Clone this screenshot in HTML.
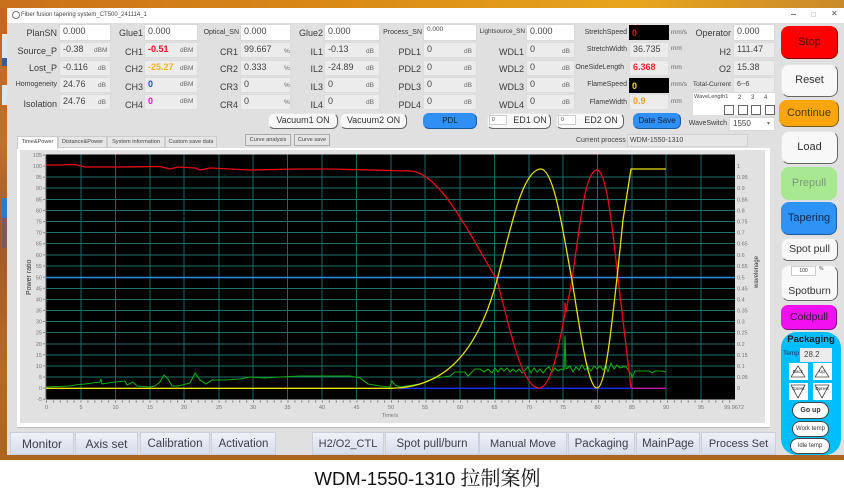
<!DOCTYPE html>
<html><head><meta charset="utf-8"><style>
html,body{margin:0;padding:0;background:#fff}
#p{position:relative;width:844px;height:490px;overflow:hidden;background:#fff;font-family:"Liberation Sans","Noto Sans CJK SC",sans-serif;color:#333}
#p div{position:absolute;box-sizing:border-box;white-space:nowrap}
.l{text-align:right;font-size:9px;height:16px;line-height:16px;color:#3a3a3a}
.s{font-size:7px}
.f{background:#ececec;border:1px solid #dcdcdc;font-size:9px;line-height:13px;padding-left:3px;height:16px;color:#444}
.w{background:#fff;border-color:#d8d8d8}
.u{font-size:6.5px;color:#666;line-height:16px;height:16px}
.b{background:#f8f8f8;border:1px solid #e6e6e6;border-right:1.5px solid #666;border-bottom:1.5px solid #666;border-radius:6px;text-align:center;color:#333}
.t{background:linear-gradient(#eef1f7,#d6dcea);border:1px solid #c9cfdc;font-size:11px;line-height:22px;text-align:center;height:23px;top:432px;color:#3c4048}
.tab{font-size:5.6px;line-height:11px;text-align:center;background:#e6e6e6;border:1px solid #ccc;height:12px;top:136px;color:#444}
.tri{background:#fff;width:19px;height:17px}
.pill{background:#fff;border:1px solid #444;border-radius:9px;text-align:center;font-size:6px;color:#333}
</style></head><body><div id="p"><div id="m" style="left:0;top:0;width:844px;height:490px;filter:blur(.3px)">

<div style="left:0;top:0;width:844px;height:8px;background:linear-gradient(90deg,#c9701a,#d98a16 40%,#e8a51c 75%,#c98a2a)"></div>
<div style="left:0;top:8px;width:7px;height:452px;background:linear-gradient(#c8641c,#c07028 30%,#a05a30 50%,#b56a20 80%,#a8661c)"></div>
<div style="left:2px;top:34px;width:5px;height:24px;background:#dfe7ee"></div>
<div style="left:2px;top:58px;width:5px;height:8px;background:#3a5a90"></div>
<div style="left:2px;top:85px;width:5px;height:20px;background:#dfe7ee"></div>
<div style="left:2px;top:198px;width:5px;height:20px;background:#2a7ad0"></div>
<div style="left:2px;top:218px;width:5px;height:30px;background:#7a5a5a"></div>
<div style="left:0;top:455px;width:844px;height:5px;background:#a8661c"></div>

<div style="left:7px;top:8px;width:837px;height:15px;background:#fff"></div>
<div style="left:12px;top:11px;width:8px;height:8px;border:1px solid #777;border-radius:50%"></div>
<div style="left:21px;top:10px;font-size:6px;line-height:10px;color:#444">Fiber fusion tapering system_CT500_241114_1</div>
<div style="left:791px;top:14px;width:5px;height:1px;background:#777"></div>
<div style="left:811px;top:12px;width:5px;height:5px;border:1px solid #ddd"></div>
<div style="left:831px;top:9px;font-size:8px;color:#555">✕</div>
<div style="left:7px;top:23px;width:837px;height:432px;background:#e0e0e0"></div>

<div class="l" style="left:0;width:57px;top:25px">PlanSN</div><div class="f w" style="left:59px;width:52px;top:24px;height:17px">0.000</div>
<div class="l" style="left:0;width:57px;top:43px">Source_P</div><div class="f" style="left:59px;width:52px;top:42px">-0.38</div><div class="u" style="left:94px;top:43px">dBM</div>
<div class="l" style="left:0;width:57px;top:60px">Lost_P</div><div class="f" style="left:59px;width:52px;top:60px">-0.116</div><div class="u" style="left:98px;top:61px">dB</div>
<div class="l s" style="left:0;width:57px;top:77px">Homogeneity</div><div class="f" style="left:59px;width:52px;top:77px">24.76</div><div class="u" style="left:98px;top:78px">dB</div>
<div class="l" style="left:0;width:57px;top:96px">Isolation</div><div class="f" style="left:59px;width:52px;top:94px">24.76</div><div class="u" style="left:98px;top:95px">dB</div>

<div class="l" style="left:100px;width:43px;top:25px">Glue1</div><div class="f w" style="left:144px;width:54px;top:24px;height:17px">0.000</div>
<div class="l" style="left:100px;width:43px;top:44px">CH1</div><div class="f" style="left:144px;width:54px;top:42px;color:#f01020;font-weight:bold">-0.51</div><div class="u" style="left:180px;top:43px">dBM</div>
<div class="l" style="left:100px;width:43px;top:61px">CH2</div><div class="f" style="left:144px;width:54px;top:60px;color:#f5b020;font-weight:bold">-25.27</div><div class="u" style="left:180px;top:61px">dBM</div>
<div class="l" style="left:100px;width:43px;top:79px">CH3</div><div class="f" style="left:144px;width:54px;top:77px;color:#1050e0;font-weight:bold">0</div><div class="u" style="left:180px;top:77px">dBM</div>
<div class="l" style="left:100px;width:43px;top:97px">CH4</div><div class="f" style="left:144px;width:54px;top:94px;color:#f010f0;font-weight:bold">0</div><div class="u" style="left:180px;top:94px">dBM</div>

<div class="l s" style="left:190px;width:49px;top:25px">Optical_SN</div><div class="f w" style="left:240px;width:51px;top:24px;height:17px">0.000</div>
<div class="l" style="left:200px;width:38px;top:44px">CR1</div><div class="f" style="left:240px;width:51px;top:42px">99.667</div><div class="u" style="left:284px;top:44px">%</div>
<div class="l" style="left:200px;width:38px;top:61px">CR2</div><div class="f" style="left:240px;width:51px;top:60px">0.333</div><div class="u" style="left:284px;top:61px">%</div>
<div class="l" style="left:200px;width:38px;top:79px">CR3</div><div class="f" style="left:240px;width:51px;top:77px">0</div><div class="u" style="left:284px;top:78px">%</div>
<div class="l" style="left:200px;width:38px;top:97px">CR4</div><div class="f" style="left:240px;width:51px;top:94px">0</div><div class="u" style="left:284px;top:95px">%</div>

<div class="l" style="left:290px;width:33px;top:25px">Glue2</div><div class="f w" style="left:324px;width:56px;top:24px;height:17px">0.000</div>
<div class="l" style="left:290px;width:33px;top:44px">IL1</div><div class="f" style="left:324px;width:56px;top:42px">-0.13</div><div class="u" style="left:366px;top:44px">dB</div>
<div class="l" style="left:290px;width:33px;top:61px">IL2</div><div class="f" style="left:324px;width:56px;top:60px">-24.89</div><div class="u" style="left:366px;top:61px">dB</div>
<div class="l" style="left:290px;width:33px;top:79px">IL3</div><div class="f" style="left:324px;width:56px;top:77px">0</div><div class="u" style="left:366px;top:78px">dB</div>
<div class="l" style="left:290px;width:33px;top:97px">IL4</div><div class="f" style="left:324px;width:56px;top:94px">0</div><div class="u" style="left:366px;top:95px">dB</div>

<div class="l s" style="left:375px;width:47px;top:25px">Process_SN</div><div class="f w" style="left:423px;width:54px;top:24px;height:17px;font-size:6.5px;line-height:10px">0.000</div>
<div class="l" style="left:380px;width:41px;top:44px">PDL1</div><div class="f" style="left:423px;width:54px;top:42px">0</div><div class="u" style="left:464px;top:44px">dB</div>
<div class="l" style="left:380px;width:41px;top:61px">PDL2</div><div class="f" style="left:423px;width:54px;top:60px">0</div><div class="u" style="left:464px;top:61px">dB</div>
<div class="l" style="left:380px;width:41px;top:79px">PDL3</div><div class="f" style="left:423px;width:54px;top:77px">0</div><div class="u" style="left:464px;top:78px">dB</div>
<div class="l" style="left:380px;width:41px;top:97px">PDL4</div><div class="f" style="left:423px;width:54px;top:94px">0</div><div class="u" style="left:464px;top:95px">dB</div>

<div class="l" style="left:470px;width:55px;top:24px;font-size:6.4px">Lightsource_SN</div><div class="f w" style="left:526px;width:49px;top:24px;height:17px">0.000</div>
<div class="l" style="left:490px;width:34px;top:44px">WDL1</div><div class="f" style="left:526px;width:49px;top:42px">0</div><div class="u" style="left:562px;top:44px">dB</div>
<div class="l" style="left:490px;width:34px;top:61px">WDL2</div><div class="f" style="left:526px;width:49px;top:60px">0</div><div class="u" style="left:562px;top:61px">dB</div>
<div class="l" style="left:490px;width:34px;top:79px">WDL3</div><div class="f" style="left:526px;width:49px;top:77px">0</div><div class="u" style="left:562px;top:78px">dB</div>
<div class="l" style="left:490px;width:34px;top:97px">WDL4</div><div class="f" style="left:526px;width:49px;top:94px">0</div><div class="u" style="left:562px;top:95px">dB</div>

<div class="l s" style="left:575px;width:52px;top:25px">StretchSpeed</div><div class="f" style="left:629px;width:40px;top:25px;height:15px;background:#000;border-color:#000;color:#f01010;font-weight:bold;line-height:15px;padding-left:2px">0</div><div class="u" style="left:671px;top:25px">mm/s</div>
<div class="l s" style="left:575px;width:52px;top:42px">StretchWidth</div><div class="f" style="left:629px;width:40px;top:42px">36.735</div><div class="u" style="left:671px;top:41px">mm</div>
<div class="l s" style="left:570px;width:54px;top:60px">OneSideLength</div><div class="f" style="left:629px;width:40px;top:60px;color:#f02030;font-weight:bold">6.368</div><div class="u" style="left:671px;top:60px">mm</div>
<div class="l s" style="left:575px;width:52px;top:77px">FlameSpeed</div><div class="f" style="left:629px;width:40px;top:78px;height:15px;background:#000;border-color:#000;color:#f0e010;font-weight:bold;line-height:15px;padding-left:2px">0</div><div class="u" style="left:671px;top:77px">mm/s</div>
<div class="l s" style="left:575px;width:52px;top:95px">FlameWidth</div><div class="f" style="left:629px;width:40px;top:94px;color:#e8a020;font-weight:bold">0.9</div><div class="u" style="left:671px;top:94px">mm</div>

<div class="l" style="left:690px;width:41px;top:25px">Operator</div><div class="f w" style="left:733px;width:42px;top:24px;height:17px">0.000</div>
<div class="l" style="left:700px;width:31px;top:44px">H2</div><div class="f" style="left:733px;width:42px;top:42px">111.47</div>
<div class="l" style="left:700px;width:31px;top:61px">O2</div><div class="f" style="left:733px;width:42px;top:60px">15.38</div>
<div class="l" style="left:680px;width:51px;top:77px;font-size:6.6px">Total-Current</div><div class="f" style="left:733px;width:42px;top:77px;font-size:7px">6--6</div>

<div style="left:693px;top:93px;width:82px;height:22px;background:#fff"></div>
<div style="left:694px;top:94px;font-size:5.6px;color:#444">WaveLength1</div>
<div style="left:738px;top:95px;font-size:6px;word-spacing:8px;color:#444">2 3 4</div>
<div style="left:724px;top:105px;width:10px;height:10px;border:1px solid #666"></div>
<div style="left:738px;top:105px;width:10px;height:10px;border:1px solid #666"></div>
<div style="left:751px;top:105px;width:10px;height:10px;border:1px solid #666"></div>
<div style="left:765px;top:105px;width:10px;height:10px;border:1px solid #666"></div>
<div class="l s" style="left:680px;width:47px;top:116px">WaveSwitch</div>
<div class="f w" style="left:729px;width:46px;top:117px;height:14px;font-size:8px;line-height:12px">1550</div>
<div style="left:767px;top:120px;font-size:6px;color:#777">▾</div>

<div class="b" style="left:268px;top:113px;width:70px;height:16px;font-size:9px;line-height:13px">Vacuum1 ON</div>
<div class="b" style="left:340px;top:113px;width:67px;height:16px;font-size:9px;line-height:13px">Vacuum2 ON</div>
<div class="b" style="left:423px;top:113px;width:54px;height:16px;font-size:8px;line-height:13px;background:#2f8ff5;color:#123;border-color:#2f8ff5 #1a5aa0 #1a5aa0 #2f8ff5">PDL</div>
<div class="b" style="left:487px;top:113px;width:64px;height:16px;font-size:9px;line-height:13px;padding-left:22px">ED1 ON</div>
<div style="left:489px;top:115px;width:18px;height:10px;background:#fff;border:1px solid #ccc;font-size:5px;line-height:8px;padding-left:2px">0</div>
<div class="b" style="left:556px;top:113px;width:68px;height:16px;font-size:9px;line-height:13px;padding-left:22px">ED2 ON</div>
<div style="left:558px;top:115px;width:18px;height:10px;background:#fff;border:1px solid #ccc;font-size:5px;line-height:8px;padding-left:2px">0</div>
<div class="b" style="left:633px;top:113px;width:48px;height:16px;font-size:8px;line-height:13px;background:#2f8ff5;color:#123;border-color:#2f8ff5 #1a5aa0 #1a5aa0 #2f8ff5">Date Save</div>

<div class="b" style="left:781px;top:26px;width:57px;height:33px;background:#ff0000;font-size:11px;line-height:30px;border-radius:8px;color:#400808;border-color:#f00 #800 #800 #f00">Stop</div>
<div class="b" style="left:781px;top:64px;width:57px;height:33px;font-size:11px;line-height:30px;border-radius:8px">Reset</div>
<div class="b" style="left:779px;top:100px;width:60px;height:27px;background:#f9a50e;font-size:11px;line-height:25px;border-radius:8px;color:#4a3a10;border-color:#f9a50e #806020 #806020 #f9a50e">Continue</div>
<div class="b" style="left:781px;top:131px;width:57px;height:33px;font-size:11px;line-height:31px;border-radius:8px">Load</div>
<div class="b" style="left:781px;top:167px;width:56px;height:33px;background:#a8e890;font-size:11px;line-height:31px;border-radius:8px;color:#7a9a78;border-color:#a8e890">Prepull</div>
<div class="b" style="left:781px;top:202px;width:56px;height:33px;background:#2f92f5;font-size:11px;line-height:31px;border-radius:8px;color:#102a50;border-color:#2f92f5 #1a5aa0 #1a5aa0 #2f92f5">Tapering</div>
<div class="b" style="left:781px;top:238px;width:57px;height:23px;font-size:10.5px;line-height:21px;border-radius:7px">Spot pull</div>
<div class="b" style="left:781px;top:265px;width:57px;height:36px;font-size:10.5px;line-height:50px;border-radius:8px">Spotburn</div>
<div style="left:791px;top:266px;width:25px;height:10px;background:#fff;border:1px solid #ccc;font-size:5px;line-height:8px;text-align:center">100</div>
<div style="left:819px;top:266px;font-size:5px;color:#555">%</div>
<div class="b" style="left:781px;top:305px;width:56px;height:25px;background:#f010f0;font-size:10.5px;line-height:23px;border-radius:7px;color:#401040;border-color:#f010f0 #801080 #801080 #f010f0">Coldpull</div>

<div style="left:781px;top:332px;width:60px;height:123px;background:#00bdfb;border-radius:16px"></div>
<div style="left:781px;top:334px;width:60px;text-align:center;font-size:9.5px;font-weight:bold;color:#101820">Packaging</div>
<div style="left:783px;top:350px;font-size:6.5px;color:#234">Temp</div>
<div class="f" style="left:800px;top:348px;width:32px;height:14px;font-size:8px;line-height:12px;border-color:#e8e8e8">28.2</div>
<div class="tri" style="left:789px;top:363px"></div><div class="tri" style="left:813px;top:363px"></div>
<div class="tri" style="left:789px;top:383px"></div><div class="tri" style="left:813px;top:383px"></div>
<div class="pill" style="left:792px;top:402px;width:37px;height:17px;font-size:7px;font-weight:bold;line-height:15px;border-width:1.5px">Go up</div>
<div class="pill" style="left:792px;top:421px;width:37px;height:16px;line-height:14px">Work temp</div>
<div class="pill" style="left:790px;top:438px;width:40px;height:16px;line-height:14px">Idle temp</div>

<div style="left:17px;top:148px;width:753px;height:280px;background:#fff;border-bottom:1px solid #bbb"></div>
<div style="left:20px;top:150px;width:745px;height:273px;background:#e1e1e1"></div>
<div class="tab" style="left:17px;width:41px;background:#fff;height:13px;border-bottom:0">Time&amp;Power</div>
<div class="tab" style="left:58px;width:49px">Distance&amp;Power</div>
<div class="tab" style="left:107px;width:58px">System information</div>
<div class="tab" style="left:165px;width:52px">Custom save data</div>
<div class="tab" style="left:245px;width:46px;top:134px;background:#e4e4e4;border-color:#aaa">Curve analysis</div>
<div class="tab" style="left:294px;width:36px;top:134px;background:#e4e4e4;border-color:#aaa">Curve save</div>
<div style="left:576px;top:134px;font-size:7px;line-height:13px;color:#444">Current process</div>
<div class="f" style="left:627px;top:134px;width:121px;height:13px;font-size:7px;line-height:11px;padding-left:2px;border-color:#d0d0d0;background:#e6e6e6">WDM-1550-1310</div>

<svg style="position:absolute;left:0;top:0" width="844" height="490" viewBox="0 0 844 490" font-family="Liberation Sans, sans-serif">
<g fill="none" stroke-width=".8" stroke-linejoin="round">
<path d="M791 377l7-11 7 11zM815 377l7-11 7 11z" stroke="#444"/><path d="M791 385l7 13 7-13zM815 385l7 13 7-13z" stroke="#444"/>
</g>
<g font-size="4.5" fill="#222" text-anchor="middle"><text x="798" y="373">Back</text><text x="822" y="373">Up</text><text x="798" y="390">Tprest</text><text x="822" y="390">Dprest</text></g>
<rect x="46" y="154.5" width="689" height="245" fill="#000"/>
<g stroke="#1a736e" stroke-width=".9">
<path d="M46 177H735M46 188H735M46 199.500H735M46 210.500H735M46 221.500H735M46 232.500H735M46 243.500H735M46 255H735M46 266H735M46 288.500H735M46 299.500H735M46 310.500H735M46 321.500H735M46 332.500H735M46 344H735M46 355H735M46 366H735M46 377H735"/>
<path d="M81 154.500V399.500M115.500 154.500V399.500M150 154.500V399.500M184 154.500V399.500M219 154.500V399.500M253 154.500V399.500M287.500 154.500V399.500M322 154.500V399.500M356.500 154.500V399.500M391 154.500V399.500M425 154.500V399.500M460 154.500V399.500M494.500 154.500V399.500M529 154.500V399.500M563 154.500V399.500M597.500 154.500V399.500M632 154.500V399.500M666 154.500V399.500M701 154.500V399.500"/>
</g>
<path d="M46 399.500V154.500" stroke="#555"/>
<path d="M46 401.500H735" stroke="#777" stroke-width="2" stroke-dasharray="1 5.900"/>
<path d="M44 154.500V400" stroke="#888" stroke-width="2" stroke-dasharray="1 10.100"/>
<path d="M46 277.500H735" stroke="#2a90ee" stroke-width="1.600"/>
<path d="M400 388.300H632" stroke="#1530f0" stroke-width="1.300"/>
<path d="M632 388.300H666" stroke="#c020a0" stroke-width="1.300"/>
<path fill="none" stroke="#12aa12" stroke-width="1.100" stroke-linejoin="round" d="M46 387L70 386L75 385L85 384L100 382L101 379L102 384L115 382L125 381L127 385L133 382L137 386L150 387L155 386L160 382L164 375L168 379L172 386L178 386L190 383L195 373L200 380L206 384L212 380L225 380L240 379L250 377L265 378L280 377L300 376L320 376L350 376L360 378L368 384L380 386L390 387L392 381L395 385L400 387L420 384L435 378L450 376L455 372L465 372L468 376L475 369L480 369L484 372L488 369L492 373L495 368L498 372L501 368L504 371L507 368L510 372L513 369L516 372L519 369L522 373L525 370L528 367L531 373L534 368L537 372L540 369L543 373L546 369L549 367L552 372L555 368L558 371L561 369L564 370L565 336L566 369L570 366L573 372L576 367L579 370L582 365L585 370L588 367L591 371L594 366L597 369L600 366L603 370L606 366L608 372L611 363L614 369L617 365L620 368L623 367L626 367L629 371L631 374L632 378L635 371L650 371L652 373L655 371L662 371L666 372"/>
<path fill="none" stroke="#e80c18" stroke-width="1.300" stroke-linejoin="round" d="M46 165L60 165L75 164.500L85 167L120 167L160 166.500L170 169L178 167L195 168L200 170L210 168L250 170L300 169L330 169L410 171C440 172 470 235 497 280C510 330 522 388 539 388C552 388 560 340 565 313L565 303L566 312L572 280C580 225 585 170 597 170C607 170 613 235 618 278L631 388"/>
<path fill="none" stroke="#e8e010" stroke-width="1.300" stroke-linejoin="round" d="M46 388.300L390 388.300C438 388 475 362 497 280C510 232 522 169 541 169C555 169 565 245 572 280C580 330 588 388 597 388C606 388 612 320 617 278L623 220L631 169L666 169"/>
<g font-size="5.500" fill="#777" text-anchor="end"><text x="42" y="157">105</text><text x="42" y="168">100</text><text x="42" y="179">95</text><text x="42" y="190">90</text><text x="42" y="201.500">85</text><text x="42" y="212.500">80</text><text x="42" y="223.500">75</text><text x="42" y="234.500">70</text><text x="42" y="245.500">65</text><text x="42" y="257">60</text><text x="42" y="268">55</text><text x="42" y="279.500">50</text><text x="42" y="290.500">45</text><text x="42" y="301.500">40</text><text x="42" y="312.500">35</text><text x="42" y="323.500">30</text><text x="42" y="334.500">25</text><text x="42" y="346">20</text><text x="42" y="357">15</text><text x="42" y="368">10</text><text x="42" y="379">5</text><text x="42" y="390">0</text><text x="42" y="401">-5</text></g>
<g font-size="5.500" fill="#777"><text x="737" y="168">1</text><text x="737" y="179">0.95</text><text x="737" y="190">0.9</text><text x="737" y="201.500">0.85</text><text x="737" y="212.500">0.8</text><text x="737" y="223.500">0.75</text><text x="737" y="234.500">0.7</text><text x="737" y="245.500">0.65</text><text x="737" y="257">0.6</text><text x="737" y="268">0.55</text><text x="737" y="279.500">0.5</text><text x="737" y="290.500">0.45</text><text x="737" y="301.500">0.4</text><text x="737" y="312.500">0.35</text><text x="737" y="323.500">0.3</text><text x="737" y="334.500">0.25</text><text x="737" y="346">0.2</text><text x="737" y="357">0.15</text><text x="737" y="368">0.1</text><text x="737" y="379">0.05</text><text x="737" y="390">0</text></g>
<g font-size="5.500" fill="#777" text-anchor="middle"><text x="46.500" y="409">0</text><text x="81" y="409">5</text><text x="115.500" y="409">10</text><text x="150" y="409">15</text><text x="184" y="409">20</text><text x="219" y="409">25</text><text x="253" y="409">30</text><text x="287.500" y="409">35</text><text x="322" y="409">40</text><text x="356.500" y="409">45</text><text x="391" y="409">50</text><text x="425" y="409">55</text><text x="460" y="409">60</text><text x="494.500" y="409">65</text><text x="529" y="409">70</text><text x="563" y="409">75</text><text x="597.500" y="409">80</text><text x="632" y="409">85</text><text x="666" y="409">90</text><text x="701" y="409">95</text><text x="734" y="409">99.9672</text><text x="390" y="417">Time/s</text></g>
<text transform="translate(31 295) rotate(-90)" font-size="7" fill="#333">Power ratio</text>
<text transform="translate(758 288) rotate(-90)" font-size="6" fill="#333">wavelenage</text>
</svg>

<div class="t" style="left:10px;width:64px;font-size:12px">Monitor</div>
<div class="t" style="left:75px;width:63px;font-size:12px">Axis set</div>
<div class="t" style="left:140px;width:70px;font-size:11.500px">Calibration</div>
<div class="t" style="left:211px;width:65px;font-size:11.500px">Activation</div>
<div class="t" style="left:312px;width:72px">H2/O2_CTL</div>
<div class="t" style="left:385px;width:94px;font-size:11.500px">Spot pull/burn</div>
<div class="t" style="left:479px;width:88px">Manual Move</div>
<div class="t" style="left:568px;width:67px;font-size:11.500px">Packaging</div>
<div class="t" style="left:636px;width:64px;font-size:11.500px">MainPage</div>
<div class="t" style="left:701px;width:75px">Process Set</div>
</div>

<div style="left:0;width:844px;top:466px;height:22px;line-height:22px;font-size:18.500px;text-align:center;padding-left:11px;color:#111">WDM-1550-1310 <span style="font-family:'Noto Serif CJK SC',serif;font-size:20px">拉制案例</span></div>
</div></body></html>
